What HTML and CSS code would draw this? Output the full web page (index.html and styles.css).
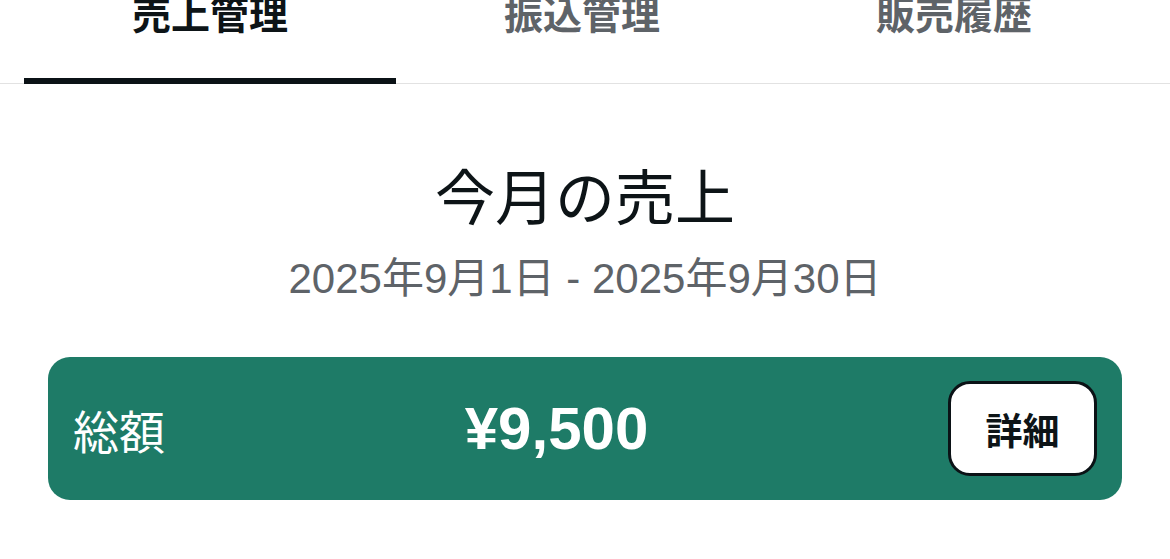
FILE: index.html
```html
<!DOCTYPE html>
<html lang="ja">
<head>
    <meta charset="UTF-8">
    <meta name="viewport" content="width=device-width, initial-scale=1.0">
    <title>売上管理</title>
    <link rel="stylesheet" href="styles.css">
</head>
<body>
    <nav class="tabs">
        <div class="tab active">売上管理</div>
        <div class="tab">振込管理</div>
        <div class="tab">販売履歴</div>
    </nav>

    <section class="summary">
        <h1 class="title">今月の売上</h1>
        <p class="period">2025年9月1日 - 2025年9月30日</p>

        <div class="total-card">
            <span class="total-label">総額</span>
            <span class="total-amount">¥9,500</span>
            <button class="detail-btn">詳細</button>
        </div>
    </section>
</body>
</html>
```

FILE: styles.css
```css
body {
    font-family: 'Liberation Sans', 'Noto Sans CJK JP', sans-serif;
    background-color: #fff;
    color: #0d1417;
    margin: 0;
}
.tabs {
    display: flex;
    height: 84px;
    padding: 0 30px 0 24px;
    border-bottom: 1px solid #e2e2e2;
    box-sizing: border-box;
}
.tab {
    position: relative;
    flex: 1;
    text-align: center;
    font-size: 39px;
    font-weight: bold;
    line-height: 32px;
    color: #5e6368;
}
.tab.active {
    color: #0d1417;
}
.tab.active::after {
    content: "";
    position: absolute;
    left: 0;
    right: 0;
    bottom: -1px;
    height: 6px;
    background-color: #0b1216;
}
.summary {
    padding: 0 48px;
    text-align: center;
}
.title {
    font-size: 60px;
    font-weight: normal;
    line-height: 72px;
    margin: 80px 0 0;
}
.period {
    font-size: 42px;
    line-height: 50px;
    color: #5e6368;
    margin: 18px 0 0;
}
.total-card {
    display: flex;
    justify-content: space-between;
    align-items: center;
    background-color: #1e7b67;
    border-radius: 22px;
    padding: 24px 25px;
    margin-top: 53px;
    color: #fff;
}
.total-label {
    font-size: 46px;
}
.total-amount {
    font-size: 60px;
    font-weight: bold;
}
.detail-btn {
    width: 149px;
    height: 95px;
    background-color: #fff;
    border: 3px solid #0b1216;
    border-radius: 22px;
    font-family: inherit;
    font-size: 37px;
    font-weight: bold;
    color: #0d1417;
    cursor: pointer;
}
```
